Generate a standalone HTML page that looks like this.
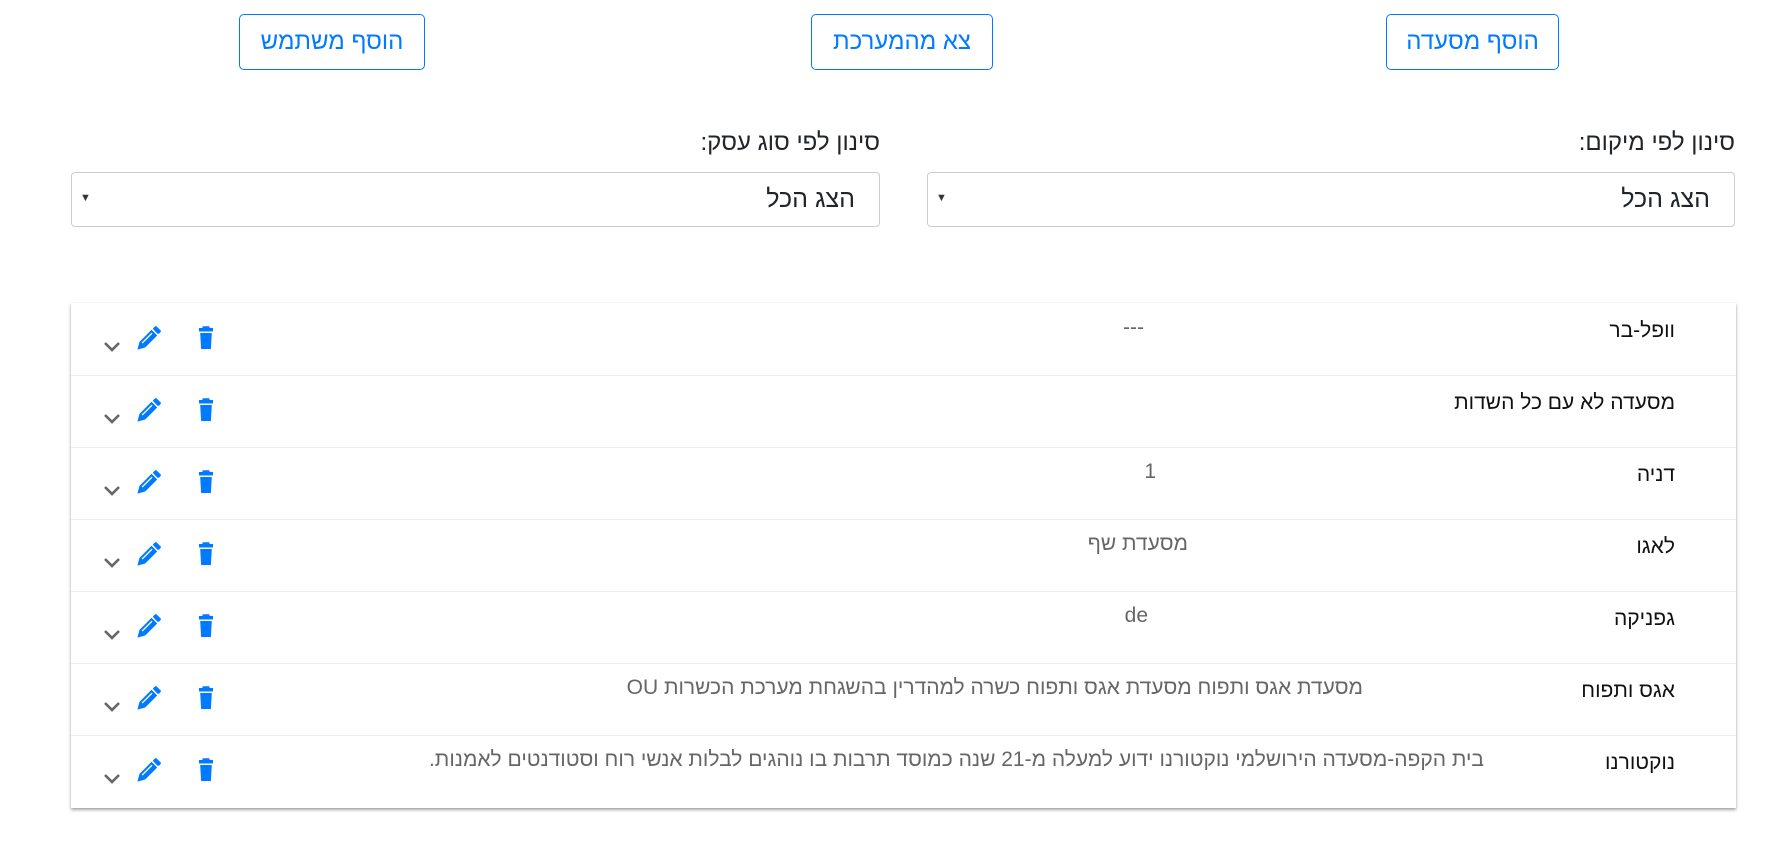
<!DOCTYPE html>
<html dir="rtl"><head><meta charset="utf-8"><style>
body{margin:0;width:1787px;height:846px;background:#fff;font-family:"Liberation Sans","Noto Sans CJK SC",sans-serif;position:relative;overflow:hidden;color:#212529}
.btn{position:absolute;top:14px;height:56px;border:1.5px solid #007bff;border-radius:5px;color:#007bff;font-size:24px;display:flex;align-items:center;justify-content:center;box-sizing:border-box;background:#fff}
.lbl{position:absolute;top:129px;font-size:24px;color:#212529}
.sel{position:absolute;top:172px;height:55px;border:1.5px solid #ccc;border-radius:4px;box-sizing:border-box;font-size:25px}
.sel .t{position:absolute;right:24px;top:12px}
.sel .a{position:absolute;left:8px;top:19px;font-size:11px;color:#333}
.tbl{position:absolute;left:71px;top:303px;width:1665px;height:505px;box-shadow:0 2px 3px rgba(0,0,0,.35),0 0 2px rgba(0,0,0,.08);background:#fff}
.row{position:absolute;left:0;width:1665px;height:72px;border-bottom:1px solid #eee}
.nm{position:absolute;right:61px;top:16px;font-size:21px;color:#111;white-space:nowrap}
.ds{position:absolute;top:13px;font-size:21px;color:#666;white-space:nowrap}
</style></head><body>
<div class="btn" style="left:1386px;width:173px">הוסף מסעדה</div>
<div class="btn" style="left:811px;width:182px">צא מהמערכת</div>
<div class="btn" style="left:239px;width:186px">הוסף משתמש</div>
<div class="lbl" style="right:52px">סינון לפי מיקום:</div>
<div class="lbl" style="right:907px">סינון לפי סוג עסק:</div>
<div class="sel" style="left:927px;width:808px"><span class="t">הצג הכל</span><span class="a">▼</span></div>
<div class="sel" style="left:71px;width:809px"><span class="t">הצג הכל</span><span class="a">▼</span></div>
<div class="tbl">
<div class="row" style="top:0"><span class="nm">וופל-בר</span><span class="ds" style="right:592px">---</span></div>
<div class="row" style="top:72px"><span class="nm">מסעדה לא עם כל השדות</span></div>
<div class="row" style="top:144px"><span class="nm">דניה</span><span class="ds" style="right:580px">1</span></div>
<div class="row" style="top:216px"><span class="nm">לאגו</span><span class="ds" style="right:548px">מסעדת שף</span></div>
<div class="row" style="top:288px"><span class="nm">גפניקה</span><span class="ds" style="right:588px">de</span></div>
<div class="row" style="top:360px"><span class="nm">אגס ותפוח</span><span class="ds" style="right:373px">מסעדת אגס ותפוח מסעדת אגס ותפוח כשרה למהדרין בהשגחת מערכת הכשרות OU</span></div>
<div class="row" style="top:432px;border-bottom:none"><span class="nm">נוקטורנו</span><span class="ds" style="right:252px">בית הקפה-מסעדה הירושלמי נוקטורנו ידוע למעלה מ-21 שנה כמוסד תרבות בו נוהגים לבלות אנשי רוח וסטודנטים לאמנות.</span></div>
</div>
<svg width="1787" height="846" style="position:absolute;left:0;top:0;pointer-events:none">
<defs>
<g id="ic">
<path d="M105 343 l7 7 l7 -7" fill="none" stroke="#666" stroke-width="2.6"/>
<g transform="translate(148,339) rotate(45)"><rect x="-4" y="-15" width="8" height="4.5" rx="1.5" fill="#007bff"/><path d="M-4 -9 h8 v17 l-4 7 l-4 -7 z" fill="#007bff"/><path d="M-1.3 -7 v14" stroke="#fff" stroke-width="1.3"/></g>
<path d="M199 328 h3.5 v-1.8 h7 v1.8 h3.5 v3.5 h-14 z" fill="#007bff"/><path d="M200.2 333 h11.6 l-0.9 16 h-9.8 z" fill="#007bff"/>
</g></defs>
<use href="#ic" y="0"/><use href="#ic" y="72"/><use href="#ic" y="144"/><use href="#ic" y="216"/><use href="#ic" y="288"/><use href="#ic" y="360"/><use href="#ic" y="432"/>
</svg>
</body></html>
